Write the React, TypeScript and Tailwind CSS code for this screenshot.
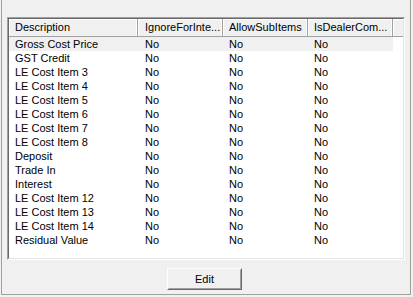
import React from "react";

const rows = [
  "Gross Cost Price",
  "GST Credit",
  "LE Cost Item 3",
  "LE Cost Item 4",
  "LE Cost Item 5",
  "LE Cost Item 6",
  "LE Cost Item 7",
  "LE Cost Item 8",
  "Deposit",
  "Trade In",
  "Interest",
  "LE Cost Item 12",
  "LE Cost Item 13",
  "LE Cost Item 14",
  "Residual Value",
];

function HeaderCell({ w, pl, children }: { w: string; pl: string; children?: React.ReactNode }) {
  return (
    <div
      className={`${w} ${pl} h-full flex items-center border-r border-r-[#a0a0a0] shadow-[inset_-1px_0_0_#ffffff,inset_1px_1px_0_#ffffff] whitespace-nowrap overflow-hidden`}
    >
      {children}
    </div>
  );
}

export default function App() {
  return (
    <div
      className="w-[413px] h-[297px] bg-[#f0f0f0] text-[11px] text-black leading-none overflow-hidden"
      style={{ fontFamily: '"Liberation Sans", Arial, sans-serif' }}
    >
      <div className="ml-px w-[410px] h-[295px] border-l border-r border-b border-[#a0a0a0] pt-[17px] flex flex-col">
        {/* list view */}
        <div className="ml-[5px] w-[398px] h-[243px] bg-white border border-t-[#a0a0a0] border-l-[#a0a0a0] border-b-white border-r-white">
          <div className="w-full h-full border border-t-[#696969] border-l-[#696969] border-b-[#e3e3e3] border-r-[#e3e3e3] flex flex-col">
            <div className="h-[18px] flex bg-[#f0f0f0] border-b border-b-[#a0a0a0]">
              <HeaderCell w="w-[129px]" pl="pl-[6px]">Description</HeaderCell>
              <HeaderCell w="w-[85px]" pl="pl-[7px]">IgnoreForInte...</HeaderCell>
              <HeaderCell w="w-[85px]" pl="pl-[6px]">AllowSubItems</HeaderCell>
              <HeaderCell w="w-[85px]" pl="pl-[6px]">IsDealerCom...</HeaderCell>
              <div className="flex-1 h-full shadow-[inset_1px_1px_0_#ffffff]" />
            </div>
            <div className="flex flex-col">
              {rows.map((r, i) => (
                <div
                  key={r}
                  className={`h-[14px] w-[384px] flex items-center ${i === 0 ? "bg-[#f0f0f0]" : ""}`}
                >
                  <div className="w-[129px] pl-[6px] whitespace-nowrap">{r}</div>
                  <div className="w-[85px] pl-[7px]">No</div>
                  <div className="w-[85px] pl-[6px]">No</div>
                  <div className="w-[85px] pl-[6px]">No</div>
                </div>
              ))}
            </div>
          </div>
        </div>
        {/* button */}
        <div className="mt-[8px] ml-[165px]">
          <div className="w-[75px] h-[22px] border border-t-white border-l-white border-b-[#696969] border-r-[#696969] bg-[#f0f0f0]">
            <div className="w-full h-full border border-transparent border-b-[#a0a0a0] border-r-[#a0a0a0] flex items-center justify-center">
              Edit
            </div>
          </div>
        </div>
      </div>
    </div>
  );
}
